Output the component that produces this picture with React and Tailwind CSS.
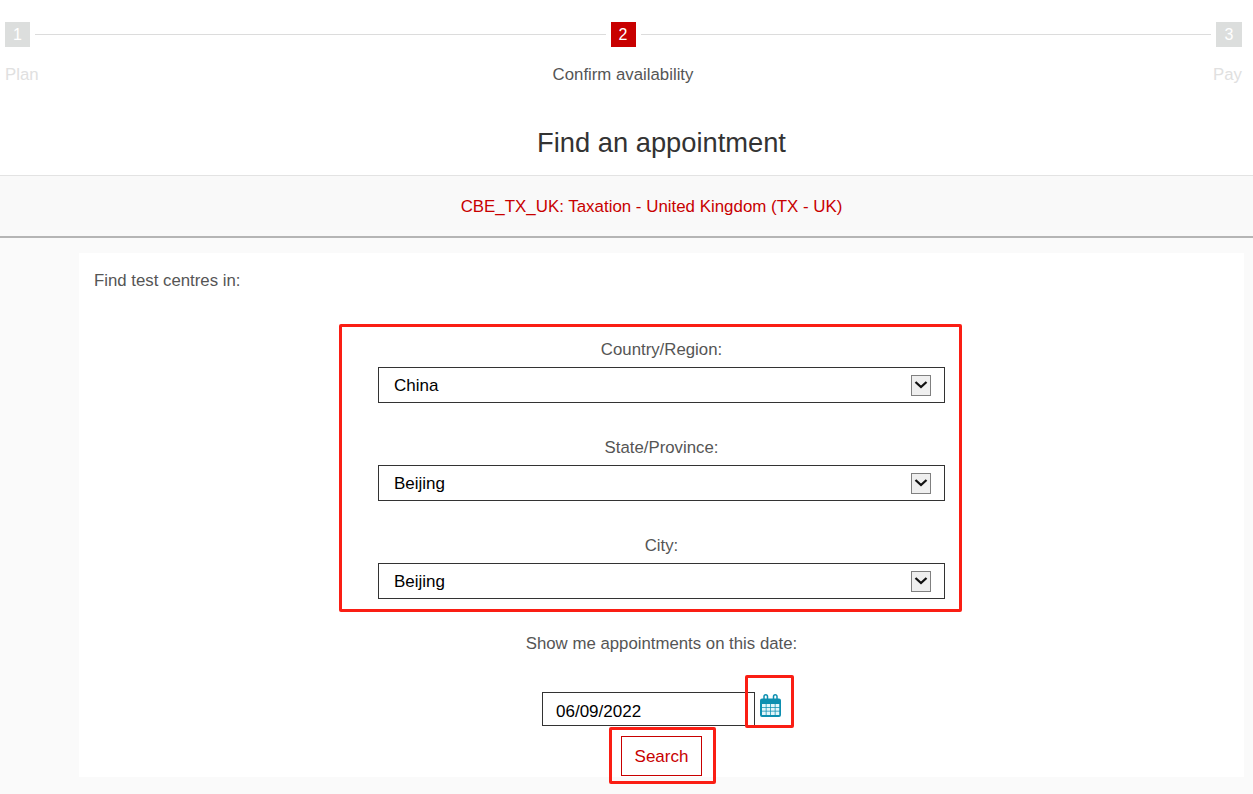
const steps = [
  { n: 1, label: "Plan" },
  { n: 2, label: "Confirm availability", active: true },
  { n: 3, label: "Pay" },
];

const fields = [
  { label: "Country/Region:", value: "China" },
  { label: "State/Province:", value: "Beijing" },
  { label: "City:", value: "Beijing" },
];

function CalendarIcon() {
  return (
    <svg width="23" height="24" viewBox="0 0 23 24" className="block">
      <path d="M1 7.500a2 2 0 0 1 2-2h17a2 2 0 0 1 2 2V22a2 2 0 0 1-2 2H3a2 2 0 0 1-2-2z" fill="#0d8fb0" />
      <path d="M5 6V3.500a1.750 1.750 0 0 1 3.500 0V6M14.500 6V3.500a1.750 1.750 0 0 1 3.500 0V6" fill="none" stroke="#0d8fb0" strokeWidth="1.500" />
      <g fill="#e2f5f9">
        <rect x="3" y="11" width="3.750" height="3" />
        <rect x="7.500" y="11" width="3.750" height="3" />
        <rect x="12" y="11" width="3.750" height="3" />
        <rect x="16.500" y="11" width="3.750" height="3" />
        <rect x="3" y="14.750" width="3.750" height="3" />
        <rect x="7.500" y="14.750" width="3.750" height="3" />
        <rect x="12" y="14.750" width="3.750" height="3" />
        <rect x="16.500" y="14.750" width="3.750" height="3" />
        <rect x="3" y="18.500" width="3.750" height="3.500" />
        <rect x="7.500" y="18.500" width="3.750" height="3.500" />
        <rect x="12" y="18.500" width="3.750" height="3.500" />
        <rect x="16.500" y="18.500" width="3.750" height="3.500" />
      </g>
    </svg>
  );
}

function SelectBox({ value }) {
  return (
    <div className="h-9 w-[567px] shrink-0 border border-[#333] bg-white flex items-center justify-between pl-[15px] pr-[13px] text-[17px] text-black">
      <span className="pt-[2px]">{value}</span>
      <span className="w-5 h-[21px] bg-[#efefef] border border-[#808080] flex items-center justify-center">
        <svg width="14" height="10" viewBox="0 0 14 10">
          <path d="M1.500 2l5.500 5 5.500-5" fill="none" stroke="#111" strokeWidth="2.300" />
        </svg>
      </span>
    </div>
  );
}

export default function App() {
  return (
    <div className="min-h-[794px] bg-[#fafafa] font-['Liberation_Sans',Arial,sans-serif] text-[#555] overflow-hidden">
      <div className="bg-white">
        {/* Progress Steps */}
        <div className="h-[110px] pt-[22px] pl-[5px] pr-[11px] flex">
          {steps.map((s, i) => (
            <div key={s.n} className="contents">
              <div className={`flex flex-col ${s.active ? "w-[25px] items-center" : i === 0 ? "w-[25px] items-start" : "w-[26px] items-end"}`}>
                <div className={`w-full h-[25px] shrink-0 flex items-center justify-center text-base text-white ${s.active ? "bg-[#c80000]" : "bg-[#dcdedd]"}`}>
                  {s.n}
                </div>
                <div className={`mt-[18px] text-[16.800px] leading-5 whitespace-nowrap ${s.active ? "text-[#555]" : "text-[#e0e0e0]"}`}>
                  {s.label}
                </div>
              </div>
              {i < 2 && <div className="flex-1 h-px mx-[5px] mt-3 bg-[#dcdcdc]" />}
            </div>
          ))}
        </div>

        <h1 className="h-[65px] pl-[70px] text-center text-[27.300px] leading-[66px] text-[#333]">
          Find an appointment
        </h1>
      </div>

      <div className="h-[63px] bg-[#f9f9f9] border-t border-[#e3e3e3] border-b-2 border-b-[#b5b5b5] pl-[50px] pt-[2px] flex items-center justify-center text-[16.900px] text-[#c80000]">
        CBE_TX_UK: Taxation - United Kingdom (TX - UK)
      </div>

      <div className="relative mt-[15px] ml-[79px] w-[1165px] h-[524px] bg-white">
        <p className="pl-[15px] pt-[18px] text-[16.800px] leading-5">Find test centres in:</p>

        <div className="mt-[49px] flex flex-col items-center">
          {fields.map((f) => (
            <div key={f.label} className="h-[98px] flex flex-col items-center">
              <label className="h-[27px] shrink-0 text-[16.800px] leading-5">{f.label}</label>
              <SelectBox value={f.value} />
            </div>
          ))}

          <div className="h-5 text-[16.800px] leading-5">Show me appointments on this date:</div>

          <div className="mt-[38px] flex items-start ml-[1px]">
            <div className="w-[213px] h-[34px] border border-[#333] bg-white pl-[13px] pt-[6px] flex items-center text-[17px] text-black">
              06/09/2022
            </div>
            <div className="ml-1 mt-px">
              <CalendarIcon />
            </div>
          </div>

          <button className="mt-[10px] w-[81px] h-10 pt-[2px] border border-[#c80000] text-[17px] text-[#c80000]">
            Search
          </button>
        </div>

        {/* red annotation frames */}
        <div className="absolute left-[260px] top-[71px] w-[623px] h-[288px] border-[3px] border-[#fa1e14] rounded-[2px]" />
        <div className="absolute left-[666px] top-[422px] w-[49px] h-[53px] border-[3px] border-[#fa1e14] rounded-[2px]" />
        <div className="absolute left-[530px] top-[474px] w-[107px] h-[57px] border-[3px] border-[#fa1e14] rounded-[2px]" />
      </div>
    </div>
  );
}
